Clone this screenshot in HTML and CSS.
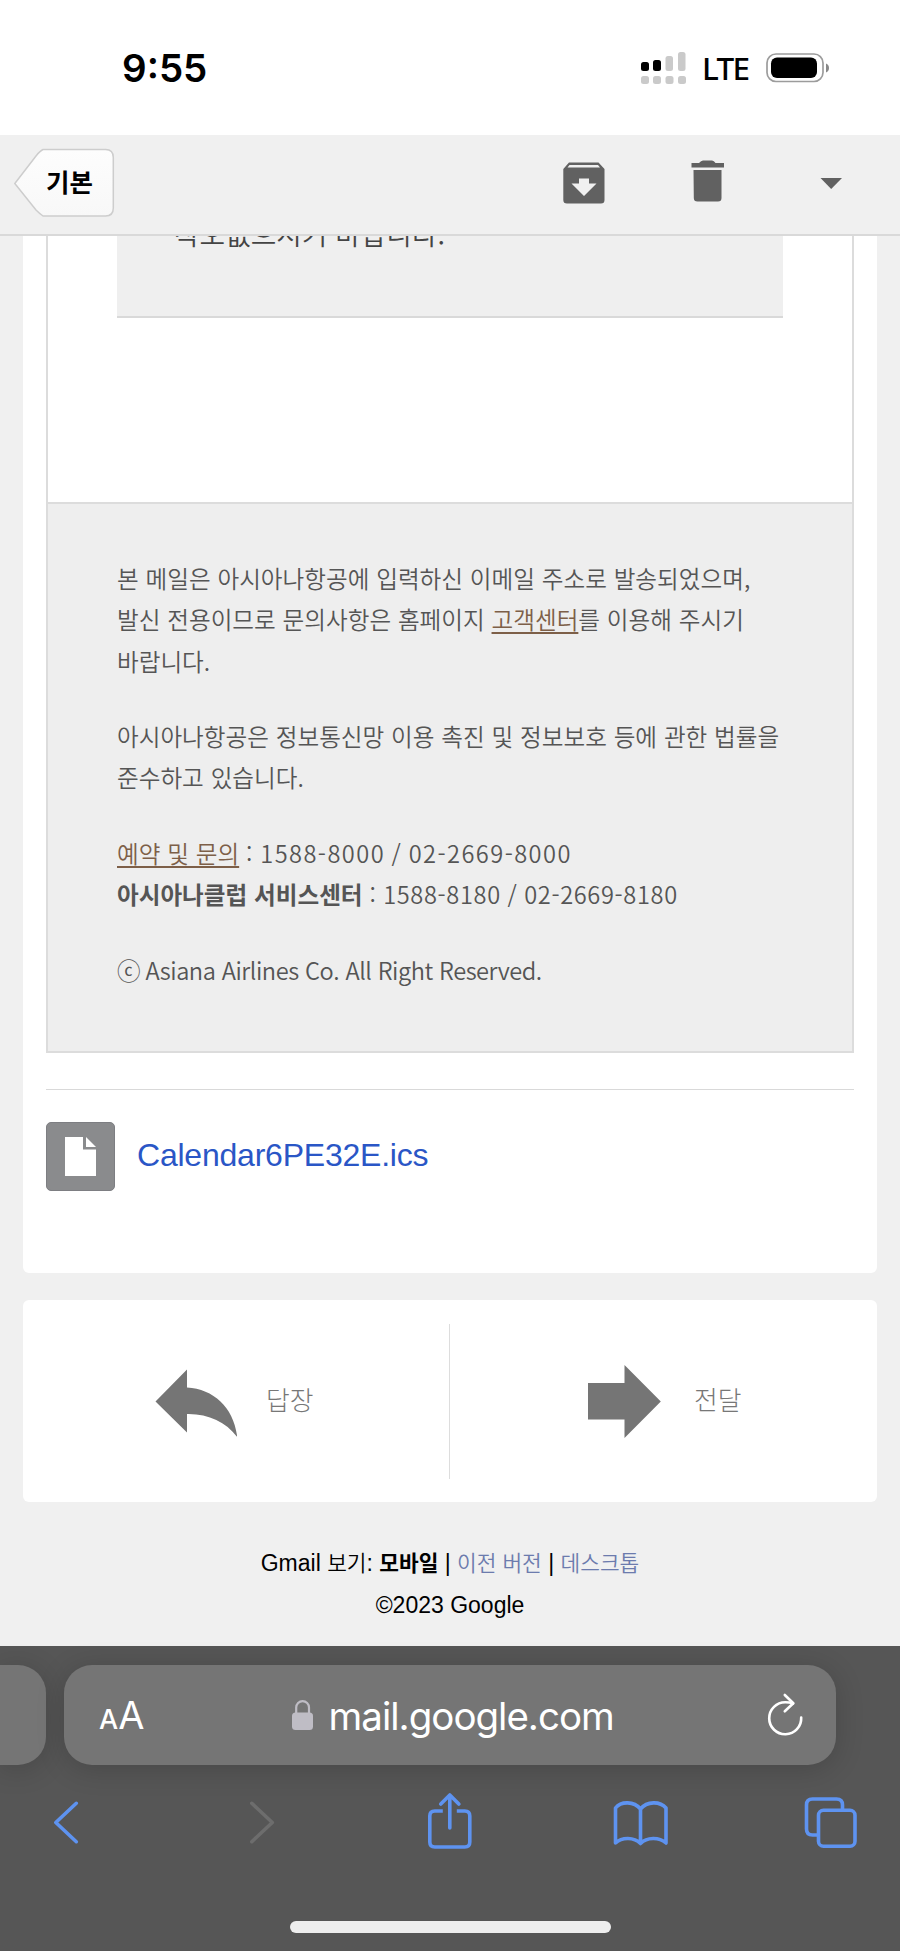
FILE: index.html
```html
<!DOCTYPE html>
<html lang="ko">
<head>
  <meta charset="UTF-8" />
  <title>Gmail</title>
  <link rel="stylesheet" href="styles.css">
</head>
<body>
  <div class="status-bar">
    <span class="time">9:55</span>
    <div class="status-icons">
      <svg class="signal" width="46" height="32" viewBox="640 51 46 32">
        <g fill="#000">
          <rect x="641" y="61" width="8" height="9" rx="2.5" />
          <rect x="653" y="59" width="8" height="11" rx="2.5" />
        </g>
        <g fill="#cacaca">
          <rect x="665.500" y="55" width="7.500" height="15" rx="2.500" />
          <rect x="678" y="51" width="7.500" height="19" rx="2.500" />
          <rect x="641" y="75" width="8" height="8" rx="2.500" />
          <rect x="653" y="75" width="8" height="8" rx="2.500" />
          <rect x="665.500" y="75" width="8" height="8" rx="2.500" />
          <rect x="678" y="75" width="8" height="8" rx="2.500" />
        </g>
      </svg>
      <span class="network">LTE</span>
      <svg class="battery" width="64" height="30" viewBox="766 52 64 30">
        <rect x="767" y="53" width="56" height="27.500" rx="9" fill="none" stroke="#9c9c9c" stroke-width="1.700" />
        <rect x="771" y="56.500" width="46" height="20.500" rx="6" fill="#000" />
        <path d="M826 62.500c4 1 4 8 0 9z" fill="#888" />
      </svg>
    </div>
  </div>

  <header class="top-bar">
    <a class="back-button" href="#">
      <svg class="back-shape" width="102" height="70" viewBox="13 148 102 70">
        <defs>
          <linearGradient id="backFill" x1="0" y1="0" x2="0" y2="1">
            <stop offset="0" stop-color="#fdfdfd" />
            <stop offset="1" stop-color="#f8f8f8" />
          </linearGradient>
        </defs>
        <path d="M43 149.500H105.500Q113.300 149.500 113.300 157.500V208Q113.300 216 105.500 216H43Q40 214 36 210L14.800 183.500L36 156Q40 151 43 149.500Z" fill="url(#backFill)" stroke="#cdcdcd" stroke-width="1.500" />
      </svg>
      <span class="back-label">기본</span>
    </a>
    <div class="top-actions">
      <svg width="42" height="42" viewBox="563 162 42 42">
        <path fill="#616161" fill-rule="evenodd" d="M569 162.500H598.500L604.500 169V200Q604.500 203.500 601 203.500H567Q563.300 203.500 563.300 200V169ZM569.500 165L567.500 167.500H600L598 165ZM579 178.500V183.500H571.500L584 196L596.500 183.500H589V178.500Z" />
      </svg>
      <svg width="34" height="42" viewBox="691 160 34 42">
        <path fill="#616161" d="M691.500 163H699Q701 160.500 703 160.500H712Q714 160.500 715.500 163H724V167.500H691.500ZM693.500 170H721.500V198Q721.500 201.500 718 201.500H697.500Q693.800 201.500 693.800 198Z" />
      </svg>
      <svg width="22" height="12" viewBox="820 177.500 22 12">
        <path fill="#616161" d="M820.500 178.500H842L831.200 189.500Z" />
      </svg>
    </div>
  </header>

  <main class="mail-card">
    <div class="mail-frame">
      <div class="notice"><span class="notice-text">착오없으시기 바랍니다.</span></div>
      <div class="mail-footer">
        <p>
          본 메일은 아시아나항공에 입력하신 이메일 주소로 발송되었으며,<br>
          발신 전용이므로 문의사항은 홈페이지 <a href="#">고객센터</a>를 이용해 주시기<br>
          바랍니다.
        </p>
        <p>
          아시아나항공은 정보통신망 이용 촉진 및 정보보호 등에 관한 법률을<br>
          준수하고 있습니다.
        </p>
        <p>
          <a href="#">예약 및 문의</a> <span class="phone wide">: 1588-8000 / 02-2669-8000</span><br>
          <strong>아시아나클럽 서비스센터</strong> <span class="phone">: 1588-8180 / 02-2669-8180</span>
        </p>
        <p>ⓒ <span class="copy">Asiana Airlines Co. All Right Reserved.</span></p>
      </div>
    </div>
    <div class="attachment">
      <svg width="69" height="69" viewBox="0 0 69 69">
        <rect x="0.500" y="0.500" width="68" height="68" rx="4.500" fill="#8a8b8d" stroke="#7d7e82" />
        <path d="M19 15H37V27.500H50V54H19Z" fill="#fff" />
        <path d="M40 15L50 25H40Z" fill="#fff" />
      </svg>
      <a class="file-name" href="#">Calendar6PE32E.ics</a>
    </div>
  </main>

  <div class="reply-card">
    <a class="reply-action" href="#">
      <svg width="82" height="74" viewBox="155 1365 82 74">
        <path fill="#757575" d="M155.500 1401.500L187 1369.500V1387.500C214 1389 234 1408 237.200 1437C226 1422 208 1413.500 187 1414V1432.500Z" />
      </svg>
      <span class="reply-label">답장</span>
    </a>
    <a class="reply-action forward" href="#">
      <svg width="74" height="74" viewBox="588 1365 74 74">
        <path fill="#757575" d="M588 1383H624.500V1365L660.800 1401.500L624.500 1438V1419.500H588Z" />
      </svg>
      <span class="reply-label">전달</span>
    </a>
  </div>

  <footer class="page-footer">
    <div>Gmail <span class="ko">보기</span>: <b class="ko">모바일</b> | <a class="ko" href="#">이전 버전</a> | <a class="ko" href="#">데스크톱</a></div>
    <div>©2023 Google</div>
  </footer>

  <div class="browser-bar">
    <div class="tabs">
      <div class="prev-tab"></div>
      <div class="url-bar">
        <span class="text-size"><small>A</small>A</span>
        <div class="address">
          <svg width="22" height="31" viewBox="292 1700 22 31">
            <rect x="292" y="1712.500" width="21" height="17.500" rx="3.500" fill="#bfbdc5" />
            <path d="M296.200 1713V1707.500A6.400 6.400 0 0 1 309 1707.500V1713" fill="none" stroke="#bfbdc5" stroke-width="2.200" />
          </svg>
          <span class="host">mail.google.com</span>
        </div>
        <svg class="reload" width="38" height="44" viewBox="767 1692.500 38 44">
          <g fill="none" stroke="#fff" stroke-width="2.600" stroke-linecap="round" stroke-linejoin="round">
            <path d="M793 1703Q789.500 1701.800 785.500 1701.800A16 16 0 1 0 801.200 1717" />
            <path d="M784.800 1694.500L793.300 1702.800L784.800 1710.800" />
          </g>
        </svg>
      </div>
    </div>
    <nav class="toolbar">
      <svg width="60" height="60" viewBox="36 1793 60 60">
        <path d="M76.300 1803.300L55.800 1822.500L76.300 1841.700" />
      </svg>
      <svg class="disabled" width="60" height="60" viewBox="227 1793 60 60">
        <path d="M251.800 1803.300L272.300 1822.500L251.800 1841.700" />
      </svg>
      <svg width="60" height="60" viewBox="419.200 1793 60 60">
        <path stroke-linecap="butt" d="M443 1811H435Q430 1811 430 1816V1842Q430 1847 435 1847H465Q470 1847 470 1842V1816Q470 1811 465 1811H457" />
        <path d="M450 1828V1796M441 1804L450 1795L459 1804" />
      </svg>
      <svg width="60" height="60" viewBox="610 1793 60 60">
        <path d="M640.500 1843.500V1809C634 1801 621 1801 615.500 1808V1843C622 1837 634 1837 640.500 1843.500C647 1837 659 1837 666 1843V1808C660 1801 647 1801 640.500 1809" />
      </svg>
      <svg width="60" height="60" viewBox="801.500 1793 60 60">
        <rect x="819" y="1810.300" width="36.500" height="36" rx="5" />
        <path d="M818.500 1835H813Q807 1835 807 1829V1805Q807 1799 813 1799H837Q843 1799 843 1805V1810" />
      </svg>
    </nav>
    <div class="home-indicator"></div>
  </div>
</body>
</html>
```
FILE: styles.css
```css
* {
  box-sizing: border-box;
}

body {
  margin: 0;
  width: 900px;
  height: 1951px;
  overflow: hidden;
  background: #f0f0f0;
  font-family: "Liberation Sans", "Noto Sans CJK KR", sans-serif;
  color: #000;
  display: flex;
  flex-direction: column;
}

svg {
  display: block;
  flex: none;
}

a {
  text-decoration: none;
}

.status-bar {
  height: 135px;
  flex: none;
  background: #fff;
  display: flex;
  justify-content: space-between;
  align-items: center;
  padding: 0 70px 0 122px;
}

.time {
  font-family: Inter, sans-serif;
  font-weight: 600;
  font-size: 38.5px;
}

.status-icons {
  display: flex;
  align-items: center;
}

.network {
  font-family: "Noto Sans", sans-serif;
  font-weight: 500;
  font-size: 31.5px;
  letter-spacing: -1.7px;
  line-height: 32px;
  width: 80px;
  padding-left: 16px;
}

.top-bar {
  height: 101px;
  flex: none;
  border-bottom: 2px solid #d9d9d9;
  display: flex;
  justify-content: space-between;
  padding: 13px 58px 0 13px;
}

.back-button {
  display: grid;
  width: 102px;
  height: 70px;
  color: #000;
}

.back-shape,
.back-label {
  grid-area: 1 / 1;
}

.back-label {
  padding-left: 33px;
  font-family: "Noto Sans CJK KR", sans-serif;
  font-size: 25.5px;
  font-weight: 700;
  line-height: 66px;
}

.top-actions {
  display: flex;
  align-items: center;
  height: 70px;
}

.top-actions svg:nth-child(2) {
  margin: -4px 95px 0 86px;
}

.mail-card {
  margin: 0 23px;
  height: 1037px;
  flex: none;
  background: #fff;
  border-radius: 0 0 6px 6px;
  padding: 0 23px;
}

.mail-frame {
  height: 817px;
  border: 2px solid #dcdcdc;
  border-top: 0;
}

/* scrolled under the top bar, only its lower part shows */
.notice {
  margin: 0 69px;
  height: 82px;
  background: #efefef;
  border-bottom: 2px solid #d9d9d9;
  padding: 0 0 63px 57px;
  display: flex;
  align-items: flex-end;
  overflow: hidden;
}

.notice-text {
  font-family: "Noto Sans CJK KR", sans-serif;
  font-size: 27.8px;
  line-height: 40px;
  font-weight: 350;
  color: #444;
}

.mail-footer {
  margin-top: 184px;
  height: 549px;
  border-top: 2px solid #dcdcdc;
  background: #eee;
  padding: 54px 0 0 69px;
  font-family: "Noto Sans CJK KR", sans-serif;
  font-size: 23.6px;
  line-height: 41.3px;
  font-weight: 350;
  color: #555;
  white-space: nowrap;
  word-spacing: 0.2px;
}

.mail-footer p {
  margin: 0 0 34.3px;
}

.mail-footer a {
  color: #7d5f48;
  text-decoration: underline;
  text-decoration-thickness: 2px;
  text-underline-offset: 3px;
}

.phone {
  letter-spacing: 0.65px;
  word-spacing: -0.5px;
}

.phone.wide {
  letter-spacing: 1.45px;
  word-spacing: -1.6px;
}

.copy {
  margin-left: -2px;
  letter-spacing: -0.46px;
}

.attachment {
  margin-top: 35.5px;
  border-top: 1px solid #d9d9d9;
  padding-top: 32.5px;
  display: flex;
}

.file-name {
  margin-left: 22px;
  font-size: 32px;
  letter-spacing: -0.22px;
  line-height: 66px;
  color: #2a56c6;
}

.reply-card {
  margin: 27px 23px 0;
  height: 202px;
  flex: none;
  background: #fff;
  border-radius: 6px;
  padding: 24px 0 23px;
  display: flex;
}

.reply-action {
  width: 427px;
  display: flex;
  align-items: center;
  padding: 0 0 0 132px;
  border-right: 1px solid #ddd;
  color: #777;
}

.reply-action.forward {
  padding-left: 138px;
  border-right: 0;
}

.reply-label {
  margin: -7px 0 0 29px;
  font-family: "Noto Sans CJK KR", sans-serif;
  font-size: 25.8px;
  font-weight: 300;
}

.forward .reply-label {
  margin-left: 32px;
}

.page-footer {
  margin-top: 41px;
  height: 103px;
  flex: none;
  text-align: center;
  font-size: 23px;
  line-height: 41.5px;
  white-space: nowrap;
}

.page-footer a {
  color: #6c7bad;
}

.ko {
  font-family: "Noto Sans CJK KR", sans-serif;
  font-size: 21.4px;
  font-weight: 350;
  line-height: 30px;
}

b.ko {
  font-weight: 700;
}

.browser-bar {
  flex: 1;
  background: #565656;
  padding-top: 19px;
}

.tabs {
  display: flex;
}

.prev-tab,
.url-bar {
  height: 100px;
  background: #757575;
  box-shadow: 0 4px 28px rgba(0, 0, 0, 0.17);
}

.prev-tab {
  width: 46px;
  border-radius: 0 28px 28px 0;
}

.url-bar {
  margin-left: 18px;
  width: 772px;
  border-radius: 28px;
  display: flex;
  justify-content: space-between;
  align-items: center;
  padding: 0 31px 0 35px;
  color: #fff;
  font-family: Inter, sans-serif;
}

.text-size {
  font-size: 38px;
}

.text-size small {
  font-size: 27px;
  font-weight: 500;
}

.address {
  display: flex;
  align-items: center;
  gap: 15px;
  padding-right: 6px;
}

.host {
  font-size: 38.5px;
  letter-spacing: -1px;
  padding-top: 1px;
}

.toolbar {
  margin-top: 28px;
  padding: 0 39px 0 36px;
  display: flex;
  justify-content: space-between;
}

.toolbar svg {
  fill: none;
  stroke: #5e93f0;
  stroke-width: 3.6;
  stroke-linecap: round;
  stroke-linejoin: round;
}

.toolbar .disabled {
  stroke: #6d6d6d;
}

.home-indicator {
  width: 321px;
  height: 12px;
  margin: 68px auto 0;
  border-radius: 6px;
  background: #eee;
}
```
